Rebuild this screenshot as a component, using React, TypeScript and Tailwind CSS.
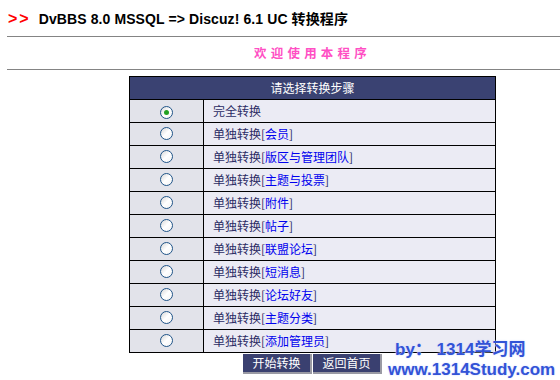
import React from 'react';

const STEPS: { label: string; part?: string }[] = [
  { label: '完全转换' },
  { label: '单独转换', part: '会员' },
  { label: '单独转换', part: '版区与管理团队' },
  { label: '单独转换', part: '主题与投票' },
  { label: '单独转换', part: '附件' },
  { label: '单独转换', part: '帖子' },
  { label: '单独转换', part: '联盟论坛' },
  { label: '单独转换', part: '短消息' },
  { label: '单独转换', part: '论坛好友' },
  { label: '单独转换', part: '主题分类' },
  { label: '单独转换', part: '添加管理员' },
];

const Radio: React.FC<{ checked?: boolean }> = ({ checked }) => (
  <span className="inline-flex items-center justify-center w-[13px] h-[13px] rounded-full border border-[#1f5488] bg-gradient-to-br from-[#d8d8d8] via-white to-[#f4f4f4]">
    {checked && <span className="w-[5px] h-[5px] rounded-full bg-[#21a121]" />}
  </span>
);

const App: React.FC = () => {
  const cjk = "font-['Noto_Sans_CJK_SC',sans-serif]";
  return (
    <div className="relative w-[560px] h-[380px] overflow-hidden bg-white font-['Liberation_Sans','Noto_Sans_CJK_SC',sans-serif]">
      {/* Title */}
      <div className="pt-[9px] pl-[8px] flex items-center gap-[8px] text-[14px] leading-[18px] font-bold text-black">
        <span className="text-[#ff0000] text-[16px] tracking-[2px]">&gt;&gt;</span>
        <span className="tracking-[0.1px]">
          DvBBS 8.0 MSSQL =&gt; Discuz! 6.1 UC <span className={cjk}>转换程序</span>
        </span>
      </div>
      <div className="ml-[7px] mt-[8px] border-t border-[#848484]" />

      <div className="w-[625px]">
        <div className={`h-[32px] flex items-center justify-center text-[12.5px] font-bold tracking-[4.2px] text-[#ff4fc4] ${cjk}`}>
          欢迎使用本程序
        </div>
      </div>
      <div className="ml-[7px] border-t border-[#848484]" />

      <div className="w-[625px] flex flex-col items-center mt-[6px]">
        <table className={`w-[367px] border-collapse text-[12px] ${cjk}`}>
          <thead>
            <tr>
              <th colSpan={2} className="h-[23px] border border-black bg-[#3a4272] text-white font-normal leading-[16px]">
                请选择转换步骤
              </th>
            </tr>
          </thead>
          <tbody>
            {STEPS.map((s, i) => (
              <tr key={i}>
                <td className="w-[74px] h-[23px] border border-black bg-[#e2e3ea] text-center leading-none">
                  <Radio checked={i === 0} />
                </td>
                <td className="h-[23px] border border-black bg-[#ebebf4] pl-[9px] text-[#2c2c64] leading-[16px]">
                  {s.label}
                  {s.part && (
                    <>
                      [<span className="text-[#0000ee]">{s.part}</span>]
                    </>
                  )}
                </td>
              </tr>
            ))}
          </tbody>
        </table>

        <div className={`flex gap-[1px] mt-[1px] text-[12px] text-white ${cjk}`}>
          <button className="w-[69px] h-[20px] bg-[#3a4070] border-r-2 border-b-2 border-[#9a9aa4] leading-[16px]">开始转换</button>
          <button className="w-[69px] h-[20px] bg-[#3a4070] border-r-2 border-b-2 border-[#9a9aa4] leading-[16px]">返回首页</button>
        </div>
      </div>

      {/* watermark */}
      <div className="absolute left-[388px] top-[338px] text-[17px] leading-[20px] font-bold text-[#3253d6] [text-shadow:0_0_2px_#c8d0ff,0_0_1px_#fff]">
        <div className="pl-[7px]">by： 1314<span className={cjk}>学习网</span></div>
        <div>www.1314Study.com</div>
      </div>
    </div>
  );
};

export default App;
